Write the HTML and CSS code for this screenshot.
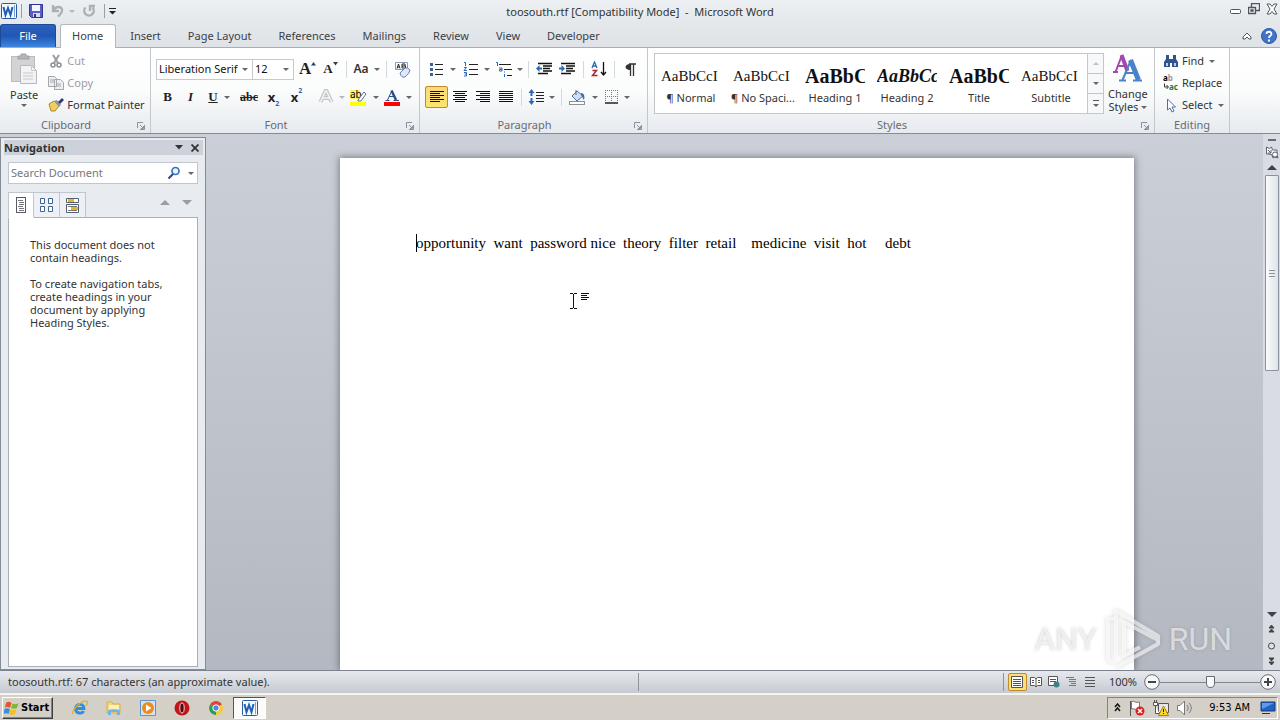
FILE: index.html
```html
<!DOCTYPE html>
<html lang="en">
<head>
<meta charset="utf-8">
<title>toosouth.rtf [Compatibility Mode] - Microsoft Word</title>
<link rel="stylesheet" href="styles.css">
</head>
<body>

<svg class="defs" aria-hidden="true">
  <symbol id="word" viewBox="0 0 16 16">
    <rect x=".5" y=".5" width="15" height="15" rx="1" fill="#f4f9ff" stroke="#2c5a9e"/>
    <path d="M13.500 2v12" stroke="#7aa0d4"/>
    <path d="M2.500 4l2 8L7 5l2.500 7 2-8" fill="none" stroke="#1f5fb4" stroke-width="2"/>
  </symbol>
  <symbol id="launcher" viewBox="0 0 8 8">
    <path d="M.5 6V.5H6M3 3l3 3M7.500 3v4.500H3M4 6.500h2.500V4" fill="none" stroke="#8c929a"/>
  </symbol>
</svg>

<div class="app">

  <!--title bar-->
  <div class="titlebar">
    <div class="quick">
      <svg width="16" height="16"><use href="#word"/></svg>
      <span class="bar"></span>
      <button class="q-save" aria-label="Save"><svg width="14" height="14" viewBox="0 0 14 14"><path d="M.5.5h13v13h-11l-2-2z" fill="#5a5fc8" stroke="#30348c"/><path d="M3 1h8v6H3z" fill="#f4f6ff"/><path d="M4 9h7v4H4z" fill="#d5d9e8"/><path d="M5 10h2v3H5z" fill="#30348c"/></svg></button>
      <button aria-label="Undo"><svg width="14" height="14" viewBox="0 0 14 14"><path d="M2 1v6h6M2.500 6.500c2-5 9-4.500 8.500 0 0 3-2 4-4 6" fill="none" stroke="#adb0b6" stroke-width="2.400"/></svg></button>
      <i class="caret pale"></i>
      <button class="q-redo" aria-label="Repeat"><svg width="14" height="14" viewBox="0 0 14 14"><path d="M3.500 3.500a4.800 4.800 0 1 0 7 0M8 7V2h5" fill="none" stroke="#adb0b6" stroke-width="2.400"/></svg></button>
      <span class="bar"></span>
      <button aria-label="Customize"><svg width="7" height="7" viewBox="0 0 7 7"><path d="M0 .5h7" stroke="#222"/><path d="M0 3h7L3.500 6.500z" fill="#222"/></svg></button>
    </div>
    <div class="title">toosouth.rtf [Compatibility Mode] &nbsp;-&nbsp; Microsoft Word</div>
    <div class="winbtns">
      <button aria-label="Minimize"><svg width="12" height="12" viewBox="0 0 12 12"><rect x=".5" y="6.500" width="10" height="4" rx="1" fill="#fff" stroke="#50565f"/></svg></button>
      <button aria-label="Restore"><svg width="12" height="12" viewBox="0 0 12 12"><path d="M3.500 4V.5h8v7H8M.5 4.500h7v6h-7zM3 7h2v1H3z" fill="none" stroke="#50565f" stroke-width="1.300"/></svg></button>
      <button aria-label="Close"><svg width="12" height="12" viewBox="0 0 12 12"><path d="M1 1h3l2 2.500L8 1h3L8 6l3 5H8L6 8.500 4 11H1l3-5z" fill="#fff" stroke="#50565f"/></svg></button>
    </div>
  </div>

  <!--tabs-->
  <div class="tabs">
    <button class="tab file">File</button>
    <button class="tab on">Home</button>
    <button class="tab">Insert</button>
    <button class="tab">Page Layout</button>
    <button class="tab">References</button>
    <button class="tab">Mailings</button>
    <button class="tab">Review</button>
    <button class="tab">View</button>
    <button class="tab">Developer</button>
    <div class="help">
      <button aria-label="Minimize the Ribbon"><svg width="10" height="8" viewBox="0 0 10 8"><path d="M1 5l4-4 4 4v2H7L5 5 3 7H1z" fill="#fff" stroke="#50565f"/></svg></button>
      <button aria-label="Help"><svg width="16" height="16" viewBox="0 0 16 16"><circle cx="8" cy="8" r="7.500" fill="#3f74c8" stroke="#2c5aa8"/><path d="M5.500 6c0-3 5-3 5 0 0 2-2.500 1.500-2.500 4" fill="none" stroke="#fff" stroke-width="1.800"/><path d="M7 11.500h2v2H7z" fill="#fff"/></svg></button>
    </div>
  </div>

  <!--ribbon-->
  <div class="ribbon">
    <section class="group clipboard">
      <div class="body">
        <button class="big">
          <svg width="28" height="32" viewBox="0 0 28 32"><rect x="1.500" y="3.500" width="23" height="25" fill="#d3d3d5" stroke="#bcbcbf"/><path d="M8 6V3h3V1h5v2h3v3z" fill="#b4b5b8" stroke="#a0a1a4"/><path d="M10.500 12.500h11l5 5v13h-16z" fill="#f3f3f5" stroke="#b7b8bc"/><path d="M21.500 12.500v5h5M13 20h10M13 23h10M13 26h10" fill="none" stroke="#c8c9cd"/></svg>
          <span>Paste</span><i class="caret"></i>
        </button>
        <div class="stack">
          <button class="row off"><svg width="16" height="14" viewBox="0 0 16 14"><path d="M5 1l5 8M11 1L6 9" stroke="#9a9da3" stroke-width="2"/><circle cx="5" cy="11" r="2" fill="none" stroke="#8a8d93" stroke-width="1.500"/><circle cx="11" cy="11" r="2" fill="none" stroke="#8a8d93" stroke-width="1.500"/></svg>Cut</button>
          <button class="row off"><svg width="16" height="14" viewBox="0 0 16 14"><path d="M.5.5h6l2 2v8h-8zM6.500 3.500h6l3 3v7h-9z" fill="#eee" stroke="#a4a7ad"/><path d="M2 4h4M2 6h4M8 8h5M8 10h5" stroke="#a4a7ad"/></svg>Copy</button>
          <button class="row"><svg width="16" height="14" viewBox="0 0 16 14"><path d="M1 6l5-3 5 5-4 5H3z" fill="#f2cf5c" stroke="#a88724"/><path d="M6 3l3-1 4 5-2 2z" fill="#8d93a8"/><path d="M10 4l4-4 2 2-4 4z" fill="#333a6c"/></svg>Format Painter</button>
        </div>
      </div>
      <div class="label">Clipboard<svg class="launch" width="8" height="8"><use href="#launcher"/></svg></div>
    </section>

    <section class="group font">
      <div class="body lines">
        <div class="line">
          <span class="combo face"><select aria-label="Font"><option>Liberation Serif</option></select><i class="caret"></i></span>
          <span class="combo size"><select aria-label="Font size"><option>12</option></select><i class="caret"></i></span>
          <button class="btn first serif grow" aria-label="Grow font">A<svg width="5" height="4" viewBox="0 0 5 4"><path d="M0 3.500h5L2.500 0z" fill="#2c3f5e"/></svg></button>
          <button class="btn serif shrink" aria-label="Shrink font">A<svg width="5" height="4" viewBox="0 0 5 4"><path d="M0 0h5L2.500 3.500z" fill="#2c3f5e"/></svg></button>
          <span class="sep"></span>
          <button class="btn tight case">Aa<i class="caret"></i></button>
          <span class="sep"></span>
          <button class="btn" aria-label="Clear formatting"><svg width="17" height="17" viewBox="0 0 17 17"><path d="M1.500 1.500h12v7h-12z" fill="#fff" stroke="#8e9bb5"/><path d="M3 7.500L4.500 3 6 7.500M3.500 6h2M8 3v4h3.500V5H8M8 3h3v2" fill="none" stroke="#223"/><path d="M6 12l5-5q3-1 5 2 0 3-5 7-4 1-5-4z" fill="#dfe8f8" stroke="#6881b0"/></svg></button>
        </div>
        <div class="line">
          <button class="btn serif"><b>B</b></button>
          <button class="btn serif"><i>I</i></button>
          <button class="btn drop serif"><u>U</u><i class="caret"></i></button>
          <button class="btn wide serif"><s>abc</s></button>
          <button class="btn script" aria-label="Subscript">x<sub>2</sub></button>
          <button class="btn script" aria-label="Superscript">x<sup>2</sup></button>
          <span class="sep"></span>
          <button class="btn tight" aria-label="Text effects"><svg width="16" height="16" viewBox="0 0 16 16"><path d="M2.500 13L7.500 2h1l5 11M5 9h6" fill="none" stroke="#c2c5ca" stroke-width="4"/><path d="M2.500 13L7.500 2h1l5 11M5 9h6" fill="none" stroke="#f4f5f7" stroke-width="1.500"/></svg><i class="caret pale"></i></button>
          <button class="btn drop" aria-label="Highlight"><svg width="17" height="18" viewBox="0 0 17 18"><rect y="14" width="16" height="4" fill="#ff0"/><rect y="2" width="10" height="9" fill="#fff36a"/><text x="0" y="10" class="ab">ab</text><path d="M8 12l6-8 2 2-5 7H8z" fill="#fff" stroke="#56749c"/></svg><i class="caret"></i></button>
          <button class="btn drop" aria-label="Font color"><svg width="16" height="18" viewBox="0 0 16 18"><rect y="14" width="16" height="4" fill="#f00"/><path d="M3.500 12L8 2.500" stroke="#2b4f86"/><path d="M7.500 2.500L12 12" stroke="#2b4f86" stroke-width="2.500"/><path d="M5 8.500h6M1.500 12.500h4M9.500 12.500H15" stroke="#2b4f86"/></svg><i class="caret"></i></button>
        </div>
      </div>
      <div class="label">Font<svg class="launch" width="8" height="8"><use href="#launcher"/></svg></div>
    </section>

    <section class="group para">
      <div class="body lines">
        <div class="line">
          <button class="btn drop" aria-label="Bullets"><svg width="15" height="15" viewBox="0 0 15 15"><path d="M1 1h3v3H1zM1 6h3v3H1zM1 11h3v3H1z" fill="#3d5f94"/><path d="M6 2.500h8M6 7.500h8M6 12.500h8" stroke="#222"/></svg><i class="caret"></i></button>
          <button class="btn drop" aria-label="Numbering"><svg width="15" height="15" viewBox="0 0 15 15"><path d="M1 .5h1.500V4M1 5.500h2.500L1 8.500h3M1 10.500h2.500v3.500H1M1.500 12h2" fill="none" stroke="#2f66b8"/><path d="M6 2.500h9M6 7.500h9M6 12.500h9" stroke="#222"/></svg><i class="caret"></i></button>
          <button class="btn tight" aria-label="Multilevel list"><svg width="17" height="15" viewBox="0 0 17 15"><path d="M1 .5h1.500V4M4 6h3v3H4.500V7.500H7M9.500 9.500v1M9.500 12v3" fill="none" stroke="#2f66b8"/><path d="M4 2.500h12M9 7.500h8M12 13.500h5" stroke="#222"/></svg><i class="caret"></i></button>
          <span class="sep"></span>
          <button class="btn" aria-label="Decrease indent"><svg width="16" height="14" viewBox="0 0 16 14"><path d="M2 1.500h14M7 4h9M7 6.500h7M7 9h9M2 11.500h10" stroke="#111" stroke-width="1.500"/><path d="M0 6.500L3.500 3v2.500H6v2H3.500V10z" fill="#2f66b8"/></svg></button>
          <button class="btn" aria-label="Increase indent"><svg width="16" height="14" viewBox="0 0 16 14"><path d="M2 1.500h14M7 4h9M7 6.500h7M7 9h9M2 11.500h10" stroke="#111" stroke-width="1.500"/><path d="M6 6.500L2.500 3v2.500H0v2h2.500V10z" fill="#2f66b8"/></svg></button>
          <span class="sep"></span>
          <button class="btn" aria-label="Sort"><svg width="16" height="16" viewBox="0 0 16 16"><path d="M1 7l2.500-6L6 7M2 5h3.500" fill="none" stroke="#2f66b8" stroke-width="1.300"/><path d="M1.500 9.500h4l-4 5h5" fill="none" stroke="#b2232b" stroke-width="1.500"/><path d="M12.500 1v13M10 11l2.500 3 2.500-3" fill="none" stroke="#111" stroke-width="1.300"/></svg></button>
          <span class="sep"></span>
          <button class="btn" aria-label="Show paragraph marks"><svg width="11" height="13" viewBox="0 0 11 13"><path d="M5 7C-1 7-1 1 5 1z" fill="#333"/><path d="M4 1h7M5.500 1v12M8.500 1v12" stroke="#333" stroke-width="1.300"/></svg></button>
        </div>
        <div class="line">
          <button class="btn active" aria-label="Align left"><svg width="14" height="12" viewBox="0 0 14 12"><path d="M0 .5h14M0 2.500h10M0 4.500h14M0 6.500h10M0 8.500h14M0 10.500h10" stroke="#111"/></svg></button>
          <button class="btn" aria-label="Center"><svg width="14" height="12" viewBox="0 0 14 12"><path d="M0 .5h14M2 2.500h10M0 4.500h14M2 6.500h10M0 8.500h14M2 10.500h10" stroke="#111"/></svg></button>
          <button class="btn" aria-label="Align right"><svg width="14" height="12" viewBox="0 0 14 12"><path d="M0 .5h14M4 2.500h10M0 4.500h14M4 6.500h10M0 8.500h14M4 10.500h10" stroke="#111"/></svg></button>
          <button class="btn" aria-label="Justify"><svg width="14" height="12" viewBox="0 0 14 12"><path d="M0 .5h14M0 2.500h14M0 4.500h14M0 6.500h14M0 8.500h14M0 10.500h14" stroke="#111"/></svg></button>
          <span class="sep"></span>
          <button class="btn tight" aria-label="Line spacing"><svg width="16" height="16" viewBox="0 0 16 16"><path d="M3.500 0l3 4H4.500v3h-2V4H.5zM3.500 16l3-4H4.500V9h-2v3H.5z" fill="#2f66b8"/><path d="M8 3.500h8M8 6.500h8M8 9.500h8M8 12.500h8" stroke="#222"/></svg><i class="caret"></i></button>
          <span class="sep"></span>
          <button class="btn drop" aria-label="Shading"><svg width="17" height="16" viewBox="0 0 17 16"><path d="M3 7l5-5 6 5-6 5z" fill="#cfe0f5" stroke="#4d6c9c"/><path d="M7 6V1" stroke="#4d6c9c"/><path d="M12 4c3 0 4 3 3 7-1-1-2-4-3-5z" fill="#3d6cb0"/><rect x=".5" y="12.500" width="15" height="3" fill="#fff" stroke="#8b8f96"/></svg><i class="caret"></i></button>
          <button class="btn drop" aria-label="Borders"><svg width="13" height="14" viewBox="0 0 13 14"><path d="M.5 0v12M6.500 0v12M12.500 0v12M0 .5h13M0 6.500h13" stroke="#777" stroke-dasharray="1 1"/><path d="M0 13h13" stroke="#222" stroke-width="1.500"/></svg><i class="caret"></i></button>
        </div>
      </div>
      <div class="label">Paragraph<svg class="launch" width="8" height="8"><use href="#launcher"/></svg></div>
    </section>

    <section class="group styles">
      <div class="body">
        <div class="gallery">
          <button class="style"><span class="sample">AaBbCcI</span><span>¶ Normal</span></button>
          <button class="style"><span class="sample">AaBbCcI</span><span>¶ No Spaci...</span></button>
          <button class="style"><span class="sample strong">AaBbC</span><span>Heading 1</span></button>
          <button class="style"><span class="sample strong slant">AaBbCc</span><span>Heading 2</span></button>
          <button class="style"><span class="sample strong">AaBbC</span><span>Title</span></button>
          <button class="style"><span class="sample">AaBbCcI</span><span>Subtitle</span></button>
          <div class="scroller">
            <button aria-label="Row up"><i class="caret up pale"></i></button>
            <button aria-label="Row down"><i class="caret"></i></button>
            <button class="more" aria-label="More"><i class="caret"></i></button>
          </div>
        </div>
        <button class="big change">
          <svg width="30" height="30" viewBox="0 0 30 30"><path d="M2.500 19L9 2" stroke="#a548ae" stroke-width="2"/><path d="M8.500 2l6 16" stroke="#a548ae" stroke-width="4"/><path d="M5 13h7M0 19h5" stroke="#a548ae" stroke-width="2"/><path d="M9.500 27L18 7" stroke="#4a82cc" stroke-width="2"/><path d="M17.500 7l8 20" stroke="#4a82cc" stroke-width="5"/><path d="M12 20h11M6 27.500h7M20 27.500h9" stroke="#4a82cc" stroke-width="2"/></svg>
          <span>Change</span><span>Styles <i class="caret"></i></span>
        </button>
      </div>
      <div class="label">Styles<svg class="launch" width="8" height="8"><use href="#launcher"/></svg></div>
    </section>

    <section class="group editing">
      <div class="body">
        <div class="stack">
          <button class="row"><svg width="16" height="14" viewBox="0 0 16 14"><path d="M3 1h3v4h4V1h3v4l2 3v5H9V9H7v4H1V8l2-3z" fill="#33538c"/><path d="M3 9h2v3H3zM11 9h2v3h-2z" fill="#bcd0ee"/></svg>Find<i class="caret"></i></button>
          <button class="row"><svg width="16" height="20" viewBox="0 0 16 20"><text x="0" y="8" class="ab rep">a<tspan class="lite">b</tspan></text><text x="6" y="17" class="ab rep green">ac</text><path d="M1.500 10.500V14H5M3.500 12l2 2-2 2" fill="none" stroke="#333"/></svg>Replace</button>
          <button class="row"><svg width="16" height="15" viewBox="0 0 16 15"><path d="M4.500 1v11l2.500-2 2 4 2-1-2-4h3.500z" fill="#fff" stroke="#4c6fa5"/></svg>Select<i class="caret"></i></button>
        </div>
      </div>
      <div class="label plain">Editing</div>
    </section>
  </div>

  <!--workspace-->
  <div class="work">
    <aside class="nav">
      <div class="navhead">
        <b>Navigation</b>
        <button aria-label="Task pane options"><svg width="8" height="5" viewBox="0 0 8 5"><path d="M0 0h8L4 4.500z" fill="#333"/></svg></button>
        <button aria-label="Close"><svg width="8" height="8" viewBox="0 0 8 8"><path d="M.5.5l7 7M7.500.5l-7 7" stroke="#333" stroke-width="1.800"/></svg></button>
      </div>
      <div class="search">
        <input type="text" placeholder="Search Document" aria-label="Search Document">
        <svg width="14" height="14" viewBox="0 0 14 14"><circle cx="8.500" cy="5" r="3.500" fill="#eaf3ff" stroke="#3573bd" stroke-width="1.700"/><path d="M6 8l-4.500 4.500" stroke="#2c4d80" stroke-width="2.200"/></svg>
        <i class="caret"></i>
      </div>
      <div class="navtabs">
        <button class="on" aria-label="Headings"><svg width="10" height="16" viewBox="0 0 10 16"><rect x=".5" y=".5" width="9" height="15" fill="#fff" stroke="#555c66"/><path d="M2 3.500h5M3 5.500h5M3 7.500h5M2 9.500h5M3 11.500h5M3 13.500h5" stroke="#777"/></svg></button>
        <button aria-label="Pages"><svg width="13" height="14" viewBox="0 0 13 14"><path d="M.5.5h4v5h-4zM8.500.5h4v5h-4zM.5 8.500h4v5h-4zM8.500 8.500h4v5h-4z" fill="#fff" stroke="#3f638f"/></svg></button>
        <button aria-label="Results"><svg width="13" height="15" viewBox="0 0 13 15"><path d="M.5.500h12v4H.5zM.5 6.500h12v8H.5z" fill="#fff" stroke="#55606e"/><path d="M2 1h6v3H2zM5 9h7v3H5z" fill="#e5b71e"/><path d="M2 8.500h9M2 12.500h9" stroke="#777"/></svg></button>
        <span class="steps"><i class="tri up"></i><i class="tri"></i></span>
      </div>
      <div class="navbody">
        <p>This document does not contain headings.</p>
        <p>To create navigation tabs, create headings in your document by applying Heading Styles.</p>
      </div>
    </aside>

    <main class="desk">
      <div class="page">
        <p class="text"><span class="cursor"></span>opportunity  want  password nice  theory  filter  retail    medicine  visit  hot     debt</p>
        <svg class="ibeam" width="19" height="17" viewBox="0 0 19 17"><path d="M0 .5h3M4 .5h3M3.500 1v14M0 15.500h3M4 15.500h3M11 .5h10M11 2.500h6M11 4.500h10M11 6.500h6" fill="none" stroke="#111"/></svg>
      </div>
    </main>

    <div class="vbar">
      <span class="split"></span>
      <svg class="ruler" width="14" height="14" viewBox="0 0 14 14"><path d="M1.500 2l3 1.500 2-1.500 1 3h4.500v5l1 3-3-1-2 1-1-3-3-1H1.500z" fill="#f4f5f7" stroke="#60656e"/><path d="M3 5l3 3M6 5v3H3" fill="none" stroke="#60656e"/><circle cx="10" cy="9.500" r="2.500" fill="#fff" stroke="#60656e"/></svg>
      <i class="tri dark up"></i>
      <span class="thumb"></span>
      <span class="track"></span>
      <i class="tri dark"></i>
      <svg class="jump" width="9" height="52" viewBox="0 0 9 52"><path d="M2 10l2.500-3L7 10zM2 14l2.500-3L7 14z" fill="#444" stroke="#444"/><circle cx="4.500" cy="28" r="3" fill="#dfe3e8" stroke="#444"/><path d="M2 40l2.500 3L7 40zM2 44l2.500 3L7 44z" fill="#444" stroke="#444"/></svg>
    </div>

    <div class="mark">
      <span>ANY</span>
      <svg width="58" height="66" viewBox="0 0 58 66"><path d="M11 13H4v38q0 4 5 5M12 51V5l42 25v3M12 61l42-23v-4L20 16v34l16-9" fill="none" stroke="currentColor" stroke-width="4" stroke-linejoin="round"/></svg>
      <span>RUN</span>
    </div>
  </div>

  <!--status bar-->
  <div class="status">
    <span class="info">toosouth.rtf: 67 characters (an approximate value).</span>
    <span class="divide"></span>
    <div class="views">
      <button class="on" aria-label="Print Layout"><svg width="12" height="12" viewBox="0 0 12 12"><path d="M.5.500h11v11H.5z" fill="#fff" stroke="#555"/><path d="M2 3.500h8M2 5.500h8M2 7.500h8M2 9.500h8" stroke="#555"/></svg></button>
      <button aria-label="Full Screen Reading"><svg width="12" height="12" viewBox="0 0 12 12"><path d="M.5 1.500h4L6 3l1.500-1.500h4v8h-4L6 11 4.500 9.500h-4zM6 3v8" fill="#fff" stroke="#555"/><path d="M2 4.500h2M2 6.500h2M8 4.500h2M8 6.500h2" stroke="#555"/></svg></button>
      <button aria-label="Web Layout"><svg width="12" height="12" viewBox="0 0 12 12"><path d="M.5.5h9v9h-9z" fill="#fff" stroke="#555"/><path d="M2 3.500h6M2 5.500h6" stroke="#555"/><circle cx="8.500" cy="8.500" r="3" fill="#3d7f86"/></svg></button>
      <button aria-label="Outline"><svg width="12" height="12" viewBox="0 0 12 12"><path d="M0 1.500h8M3 3.500h7M3 5.500h7M5 7.500h5M3 9.500h7" stroke="#777"/></svg></button>
      <button aria-label="Draft"><svg width="12" height="12" viewBox="0 0 12 12"><path d="M1 1.500h10M1 4.500h10M1 7.500h10M1 10.500h10" stroke="#555"/></svg></button>
    </div>
    <button class="pct">100%</button>
    <button class="zoombtn" aria-label="Zoom out"><svg width="16" height="16" viewBox="0 0 16 16"><circle cx="8" cy="8" r="7.300" fill="#f8f9fa" stroke="#666c75"/><path d="M4 8h8" stroke="#444" stroke-width="2"/></svg></button>
    <input class="zoom" type="range" min="0" max="100" value="50" aria-label="Zoom">
    <button class="zoombtn" aria-label="Zoom in"><svg width="16" height="16" viewBox="0 0 16 16"><circle cx="8" cy="8" r="7.300" fill="#f8f9fa" stroke="#666c75"/><path d="M4 8h8M8 4v8" stroke="#444" stroke-width="2"/></svg></button>
  </div>

  <!--taskbar-->
  <div class="taskbar">
    <button class="start"><svg width="16" height="14" viewBox="0 0 16 14"><path d="M2 2c2-2 4-1 5.500 0L6 7C4 5.500 2.500 6 1 6.500z" fill="#e8542b"/><path d="M8.500 2.500c2 1 4 1 6-.5l-1.500 5c-2 1-4 1-6 0z" fill="#7db72f"/><path d="M.5 8c2-1 4-1 5.500.500L4.500 13C3 12 1.500 12-.5 13z" fill="#3b8ede"/><path d="M6.500 8.500c2 1 4 1 6 0L11 13c-2 1.500-4 1-6 0z" fill="#f5c01c"/></svg>Start</button>
    <div class="apps">
      <button aria-label="Internet Explorer"><svg width="16" height="16" viewBox="0 0 16 16"><path d="M3.500 8.500h8.500c0-6-9-5-8.500.500.500 5 7 5 8 2" fill="none" stroke="#2f8fdc" stroke-width="2.800"/><path d="M1 14C-1 10 11-1 15 1.500c1 1 0 3-1 4" fill="none" stroke="#e3b32b" stroke-width="1.300"/></svg></button>
      <button aria-label="Explorer"><svg width="16" height="16" viewBox="0 0 16 16"><path d="M1 2h5l1 2h7v9H1z" fill="#f3d77a" stroke="#d3b04a"/><path d="M3 5h10v4H3z" fill="#fbf0bd"/><path d="M2 15v-4c0-2 12-2 12 0v4h-3v-3H5v3z" fill="#6bb5e8"/></svg></button>
      <button aria-label="Media Player"><svg width="16" height="16" viewBox="0 0 16 16"><path d="M.5.500h15v15H.5z" fill="#cfe4f8" stroke="#5b93cc"/><circle cx="8" cy="8" r="6" fill="#f08a1c"/><path d="M6 4.500L11.500 8 6 11.500z" fill="#fff"/></svg></button>
      <button aria-label="Opera"><svg width="16" height="16" viewBox="0 0 16 16"><circle cx="8" cy="8" r="7.500" fill="#c0151b"/><ellipse cx="8" cy="8" rx="2.200" ry="5" fill="#5d080b" stroke="#f3d4d4"/></svg></button>
      <button aria-label="Chrome"><svg width="14" height="14" viewBox="0 0 14 14"><path d="M7 7L1 3.500A7 7 0 0 1 13 3.500z" fill="#e04434"/><path d="M7 7L1 3.500A7 7 0 0 0 7 14z" fill="#2da050"/><path d="M7 7l6-3.500A7 7 0 0 1 7 14z" fill="#f8cb2d"/><circle cx="7" cy="7" r="3.200" fill="#4a88ee" stroke="#fff"/></svg></button>
      <button class="running" aria-label="Microsoft Word"><svg width="16" height="16"><use href="#word"/></svg></button>
    </div>
    <div class="tray">
      <svg width="7" height="9" viewBox="0 0 7 9"><path d="M1 4l2.500-3L6 4M1 8l2.500-3L6 8" fill="none" stroke="#111" stroke-width="1.500"/></svg>
      <svg width="16" height="16" viewBox="0 0 16 16"><path d="M1.500 1v15" stroke="#555"/><path d="M2.500 1.500c3-1 4 2 8 .5v7c-4 1.500-5-1-8 0z" fill="#fff" stroke="#777"/><circle cx="11" cy="11" r="4.500" fill="#d8201c"/><path d="M9 9l4 4M13 9l-4 4" stroke="#fff" stroke-width="1.500"/></svg>
      <svg width="16" height="16" viewBox="0 0 16 16"><path d="M5.500 3.500h10v9h-10z" fill="#e4e6e8" stroke="#555"/><path d="M.5 2.500h4v3h-4zM1.500 0v2M3.500 0v2M2.500 6v7.500h4" fill="#fff" stroke="#555"/><path d="M10.500 6l5 9.500h-10z" fill="#ffd821" stroke="#a88600"/><path d="M10.500 9v3M10.500 13v1" stroke="#222"/></svg>
      <svg width="16" height="16" viewBox="0 0 16 16"><path d="M.5 5.500H3L7.500 1v14L3 10.500H.5z" fill="#fff" stroke="#777"/><path d="M10 5c1.500 2 1.500 4 0 6M12 3c3 3 3 7 0 10" fill="none" stroke="#777"/></svg>
      <span class="clock">9:53 AM</span>
      <svg width="16" height="13" viewBox="0 0 16 13"><path d="M1 1h14v9H1z" fill="#1f62c8" stroke="#123a7a"/><path d="M2 2h12L2 8z" fill="#5f9be8"/><path d="M2 12.500h8" stroke="#333"/></svg>
    </div>
  </div>

</div>
</body>
</html>
```

FILE: styles.css
```css
html, body {margin: 0; padding: 0; height: 100%;}
body {color: #333; font: 11px/14px "Noto Sans", "Open Sans", sans-serif; overflow: hidden;}
button, input, select {font: inherit; color: inherit;}
button {
  margin: 0; padding: 0; border: 0; background: none;
  display: flex; align-items: center; justify-content: center;
}
p {margin: 0;}
svg {flex: none; display: block;}
.defs {position: absolute; width: 0; height: 0;}

.app {display: flex; flex-direction: column; height: 100vh; background: #e3e7ea;}

/*small arrows*/
.caret {
  flex: none; display: inline-block; width: 0; height: 0;
  border: 3px solid transparent; border-top-color: #666; border-bottom: 0;
}
.caret.pale {border-top-color: #b5b8bd;}
.caret.up {border-top: 0; border-bottom: 3px solid #c0c3c8;}
.tri {width: 0; height: 0; border: 5px solid transparent; border-top-color: #989ca3; border-bottom: 0;}
.tri.up {border-top: 0; border-bottom: 5px solid #989ca3;}
.tri.dark {border-top-color: #3c4048;}
.tri.dark.up {border-bottom-color: #3c4048;}

/*title bar*/
.titlebar {
  display: grid; grid-template-columns: 1fr auto 1fr; align-items: center; height: 24px;
  background: linear-gradient(#edf0f2, #e4e8eb);
}
.quick {display: flex; align-items: center; padding: 0 0 2px 1px;}
.bar {width: 1px; height: 14px; background: #9a9ea5; margin: 0 7px 0 4px;}
.q-save {margin-right: 8px;}
.quick .pale {margin: 0 7px 0 4px;}
.q-redo {margin-right: 8px;}
.quick .q-redo + .bar {margin: 0 4px 0 0;}
.winbtns {display: flex; justify-content: flex-end; gap: 6px; padding: 0 2px 6px 0;}

/*tabs*/
.tabs {display: flex; gap: 1px; height: 23px; border-bottom: 1px solid #a9aeb6; background: linear-gradient(#e4e8eb, #dfe3e7);}
.tab {padding: 0 13px; color: #3b3f45;}
.tab.file {
  width: 56px; margin-right: 3px; color: #fff; border: 1px solid #1d4a97; border-bottom: 0;
  border-radius: 3px 3px 0 0; background: linear-gradient(#2c62bd, #1f57b5 50%, #3d86dc);
}
.tab.on {
  height: 24px; background: #fff; border: 1px solid #b3b8bf; border-bottom: 0;
  border-radius: 3px 3px 0 0; padding: 0 12px 1px 11px; box-sizing: border-box;
}
.help {display: flex; align-items: center; gap: 9px; margin-left: auto; padding-right: 3px;}

/*ribbon*/
.ribbon {
  display: flex; height: 85px; border-bottom: 1px solid #868b94;
  background: linear-gradient(#fff, #fbfcfc 50%, #e6eaee);
}
.group {display: flex; flex-direction: column; box-sizing: border-box; border-right: 1px solid #c3c8ce; padding: 2px 5px 0;}
.body {display: flex; height: 68px;}
.label {position: relative; padding-right: 18px; text-align: center; color: #666c74;}
.label.plain {padding-right: 0;}
.launch {position: absolute; right: 0; top: 4px;}
.clipboard {width: 151px;}
.font {width: 269px;}
.para {width: 228px;}
.styles {width: 507px;}
.editing {width: 75px;}

.big {flex-direction: column; justify-content: flex-start; padding: 3px 5px 0;}
.big svg {margin-bottom: 3px;}
.big .caret {margin-top: 2px;}
.stack {display: flex; flex-direction: column;}
.row {height: 22px; gap: 3px; justify-content: flex-start;}
.row .caret {margin-left: 2px;}
.row.off {color: #9a9da2;}
.clipboard .stack {margin-left: 5px;}
.editing .stack {margin-left: 3px;}

.lines {flex-direction: column; gap: 6px; padding-top: 8px; height: 60px;}
.line {display: flex; align-items: center; height: 22px;}
.btn {width: 23px; height: 22px; flex: none; box-sizing: border-box;}
.btn > svg {margin: 0 -4px;}
.btn .caret {margin-left: 6px;}
.btn.drop {width: 34px;}
.btn.tight {width: 31px;}
.btn.tight .caret {margin-left: 5px;}
.btn.drop > svg, .btn.tight > svg {margin: 0;}
.btn.wide {width: 26px;}
.btn.active {border: 1px solid #c28a30; border-radius: 2px; background: linear-gradient(#fcd978, #fde56c);}
.sep {width: 1px; height: 17px; margin: 0 4px; background: #d5d8dc;}
.serif {font: 700 13px/20px "Liberation Serif", serif; color: #222;}
.serif s {font-size: 12px;}
.grow {font-size: 17px;}
.btn.serif > svg {margin: 0 0 10px;}
.first {margin-left: 2px;}
.case {font-size: 12px; font-weight: 600;}
.case .caret {margin-left: 2px;}
.script {font: 700 13px/16px "Noto Sans", sans-serif; color: #222;}
.script sub, .script sup {align-self: flex-end; font-size: 7px; line-height: 9px; color: #2f66b8;}
.script sup {align-self: flex-start;}
.ab {font: 10px "Noto Sans", sans-serif;}
.ab.rep {font-weight: 700; font-size: 8px;}
.lite {fill: #999;}
.ab.green {fill: #1d7a34;}

.combo {position: relative; box-sizing: border-box; height: 21px; border: 1px solid #c6cace; background: #fff;}
.combo select {width: 100%; height: 19px; border: 0; padding: 0 2px; background: none; appearance: none; color: #111;}
.combo .caret {position: absolute; right: 4px; top: 8px;}
.combo.face {width: 99px;}
.combo.size {width: 43px; margin-left: -1px;}

/*style gallery*/
.styles .body {padding-top: 3px; height: 65px; align-items: flex-start;}
.gallery {display: flex; height: 59px; margin-left: 1px; border: 1px solid #c3c7cc; background: #fff;}
.style {flex-direction: column; width: 72px; padding: 0 6px;}
.style > span {white-space: nowrap;}
.style .sample {
  align-self: stretch; overflow: hidden; margin: 2px 0 4px; text-align: left;
  font: 15px/22px "Liberation Serif", serif; color: #111;
}
.style .strong {font-size: 20px; font-weight: 700;}
.style .slant {font-size: 18px; font-style: italic;}
.scroller {display: flex; flex-direction: column; width: 15px; border-left: 1px solid #c3c7cc;}
.scroller button {flex: 1; background: #f7f8fa;}
.scroller button + button {border-top: 1px solid #c3c7cc;}
.scroller .more {flex-direction: column; gap: 3px;}
.more::before {content: ""; width: 6px; height: 1px; background: #555;}
.change {padding: 0 0 0 4px; line-height: 13px;}
.change svg {margin-bottom: 4px;}
.change .caret {margin: 0 0 2px;}

/*workspace*/
.work {position: relative; flex: 1; min-height: 0; display: flex; background: linear-gradient(#cbcfd7, #b4b8c0);}
.nav {
  display: flex; flex-direction: column; box-sizing: border-box; width: 206px; margin-top: 3px;
  border: 1px solid #858b95; background: #e8ecf1; padding: 2px 2px 2px 3px;
}
.navhead {display: flex; align-items: center; gap: 8px; height: 15px; background: #cdd2da; padding-right: 4px;}
.navhead b {margin-right: auto;}
.search {
  display: flex; align-items: center; gap: 7px; height: 20px; margin: 7px 5px 8px 4px;
  padding: 0 3px 0 0; border: 1px solid #c0c6ce; background: #fff;
}
.search input {flex: 1; min-width: 0; border: 0; padding: 0 2px; background: none; outline: 0;}
.search input::placeholder {color: #777; opacity: 1;}
.navtabs {display: flex; margin: 0 5px 0 4px;}
.navtabs button {width: 26px; height: 26px; box-sizing: border-box; border: 1px solid #c0c6ce; border-bottom-color: #a9b0ba; border-left-width: 0; background: #edf0f4;}
.navtabs .on {border-left-width: 1px; border-bottom-color: #fff; background: #fff;}
.steps {flex: 1; display: flex; gap: 12px; justify-content: flex-end; align-items: center; padding: 0 6px 4px 0; border-bottom: 1px solid #a9b0ba;}
.navbody {flex: 1; margin: 0 5px 0 4px; padding: 20px 21px; border: 1px solid #a9b0ba; border-top: 0; background: #fff; line-height: 13px;}
.navbody p {margin-bottom: 13px;}

.desk {flex: 1; min-width: 0; display: flex; justify-content: center; padding: 24px 0 0 5px; overflow: hidden;}
.page {
  position: relative; width: 794px; box-sizing: border-box; padding: 76px 76px 0; background: #fff;
  box-shadow: 0 0 7px 1px rgba(70, 74, 84, .6);
}
.text {font: 15px/18px "Liberation Serif", serif; color: #000; white-space: pre-wrap;}
.cursor {display: inline-block; width: 1px; height: 18px; margin-right: -1px; background: #000; vertical-align: -4px;}
.ibeam {position: absolute; left: 230px; top: 135px;}

.vbar {display: flex; flex-direction: column; align-items: center; width: 17px; background: #d9dde3;}
.split {width: 8px; height: 2px; margin: 5px 0 4px; background: #666b74;}
.ruler {margin-bottom: 6px;}
.vbar .up {margin-bottom: 5px;}
.thumb {
  width: 12px; height: 194px; border: 1px solid #8c929c; border-radius: 1px;
  background: repeating-linear-gradient(#8c929c 0 1px, transparent 1px 3px) center / 6px 7px no-repeat, linear-gradient(90deg, #fafbfc, #dfe3e9);
}
.track {flex: 1;}
.jump {margin-top: 1px;}

/*watermark*/
.mark {
  position: absolute; right: 48px; bottom: -2px; display: flex; align-items: center; gap: 7px;
  color: rgba(255, 255, 255, .6); font: 32px/60px "Liberation Sans Narrow", "Roboto", sans-serif;
  text-shadow: 0 0 3px rgba(100, 100, 110, .35);
}
.mark svg {filter: drop-shadow(0 0 2px rgba(100, 100, 110, .4));}

/*status bar*/
.status {
  display: flex; align-items: center; height: 22px; padding: 0 4px 0 8px; border-top: 1px solid #7d838d;
  background: linear-gradient(#e6e9ed, #c6cad1);
}
.info {flex: 0 0 630px;}
.divide {flex: 1; height: 18px; border: 1px solid #8f959e; border-width: 0 1px; margin-right: 4px;}
.views {display: flex; align-items: center;}
.views button {width: 18px; height: 18px; box-sizing: border-box;}
.views .on {width: 19px; border: 1px solid #c28a30; border-radius: 2px; background: #fde074;}
.pct {margin: 0 7px 0 10px;}
.zoom {appearance: none; width: 100px; height: 16px; margin: 0; background: linear-gradient(#80858e, #80858e) center / 100% 1px no-repeat;}
.zoom::-webkit-slider-thumb {
  appearance: none; width: 9px; height: 12px; border: 1px solid #666c75;
  border-radius: 1px 1px 5px 5px; background: #fafbfc;
}

/*taskbar*/
.taskbar {
  display: flex; align-items: center; height: 25px; padding: 0 2px 0 2px; border-top: 2px solid #f5f4f1;
  background: #d4d0c8; color: #000; font-family: "DejaVu Sans Condensed", "DejaVu Sans", sans-serif;
}
.start {
  height: 22px; padding: 0 3px 0 1px; gap: 1px; font-weight: 700;
  border: 1px solid; border-color: #fff #404040 #404040 #fff; box-shadow: inset -1px -1px #868379;
}
.apps {display: flex; align-items: center; gap: 1px; margin-left: 10px;}
.apps button {width: 33px; height: 22px;}
.apps .running {box-sizing: border-box; border: 1px solid; border-color: #555 #fff #fff #555; background: #fbfbfa;}
.tray {
  display: flex; align-items: center; gap: 8px; height: 20px; margin-left: auto; padding: 0 1px 0 6px;
  border: 1px solid; border-color: #86837b #fff #fff #86837b;
}
.clock {margin: 0 2px 0 8px;}
```
